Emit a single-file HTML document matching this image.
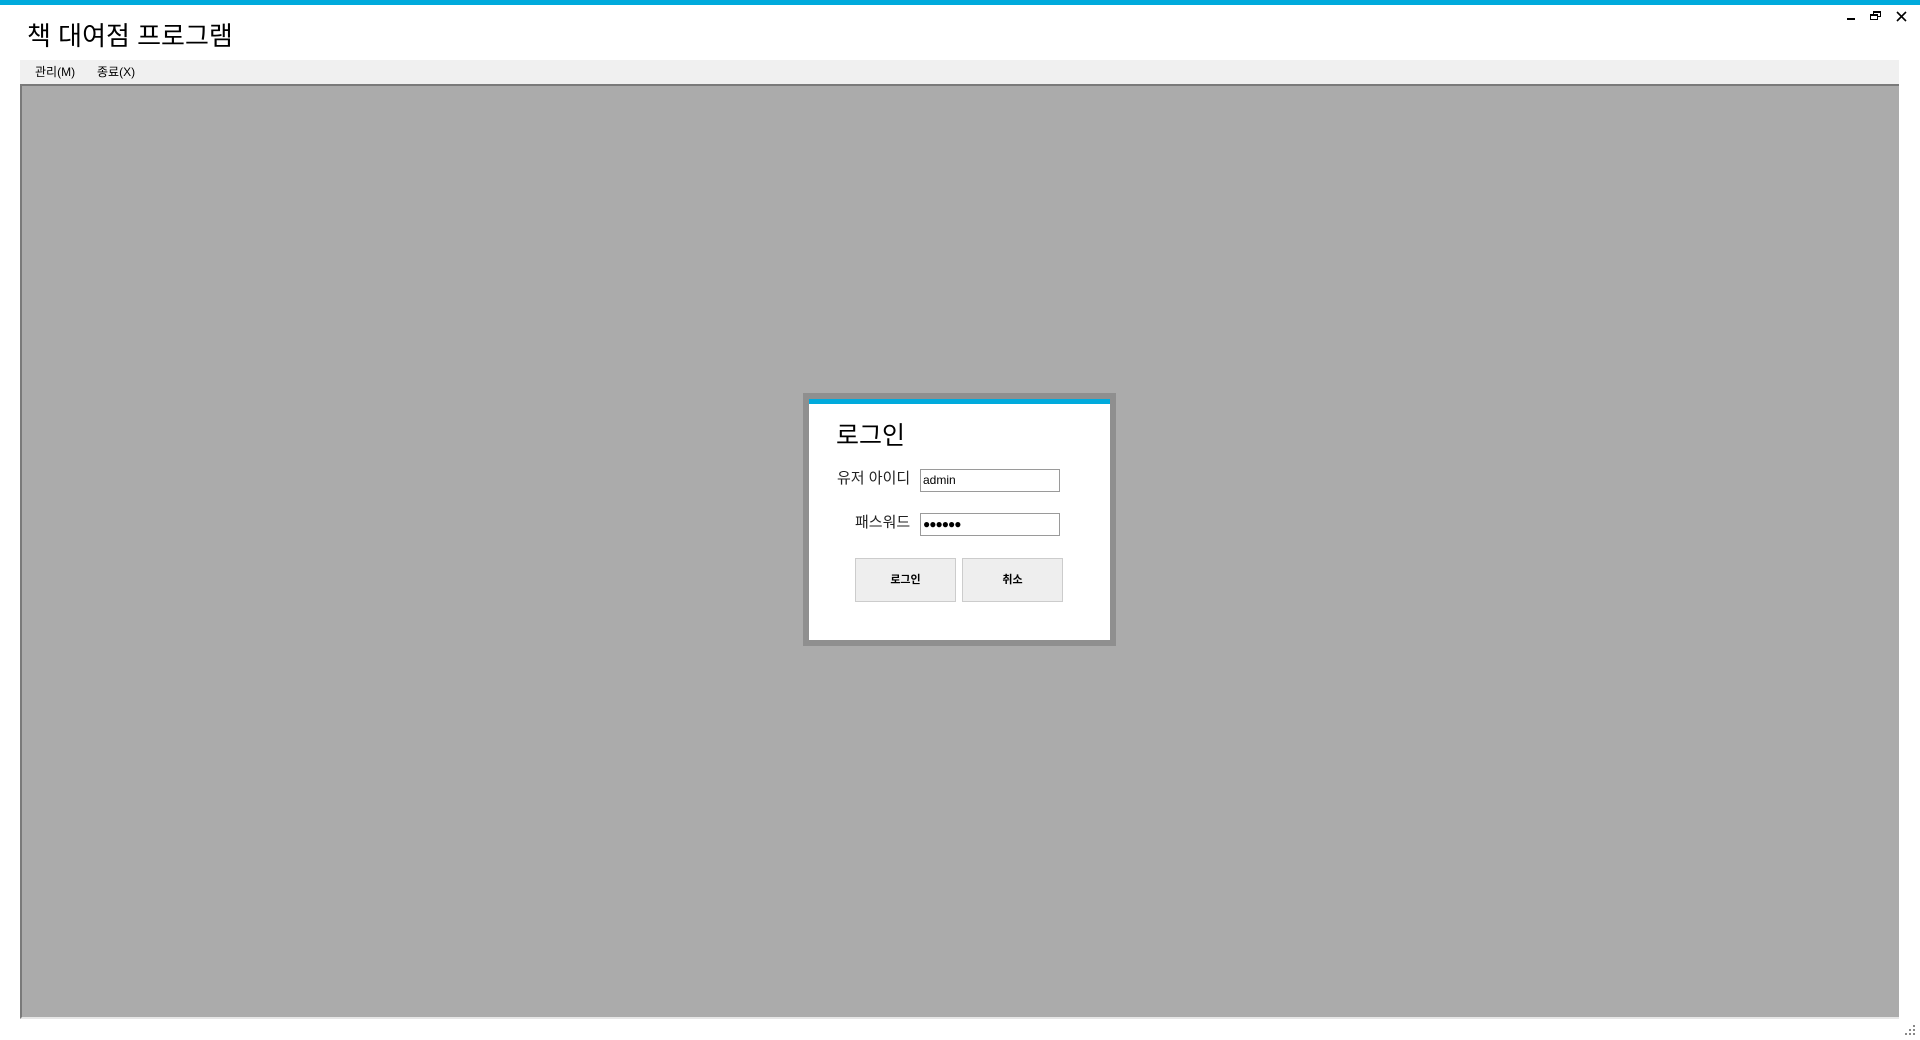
<!DOCTYPE html>
<html><head><meta charset="utf-8"><style>
*{margin:0;padding:0;box-sizing:border-box}
body{width:1920px;height:1040px;background:#fff;position:relative;overflow:hidden;font-family:"Liberation Sans","Noto Sans CJK KR",sans-serif;color:#000}
.abs{position:absolute}
</style></head><body>
<div class="abs" style="left:0;top:0;width:1920px;height:5px;background:#00aadc"></div>
<div class="abs" style="left:27px;top:19px;font-size:26px;line-height:34px">책 대여점 프로그램</div>
<div class="abs" style="left:1847px;top:18px;width:8px;height:2px;background:#000"></div>
<svg class="abs" style="left:1869px;top:10px" width="14" height="12"><rect x="4.5" y="1.5" width="7" height="5" fill="none" stroke="#000"/><rect x="1.5" y="4.5" width="7" height="5" fill="#fff" stroke="#000"/><line x1="4" y1="2" x2="12" y2="2" stroke="#000" stroke-width="2"/><line x1="1" y1="5" x2="9" y2="5" stroke="#000" stroke-width="2"/></svg>
<svg class="abs" style="left:1896px;top:11px" width="11" height="11"><path d="M1 1L10 10M10 1L1 10" stroke="#000" stroke-width="1.6"/></svg>
<div class="abs" style="left:20px;top:60px;width:1879px;height:24px;background:#f0f0f0"></div>
<div class="abs" style="left:35px;top:63px;font-size:12px;line-height:18px">관리(M)</div>
<div class="abs" style="left:97px;top:63px;font-size:12px;line-height:18px">종료(X)</div>
<div class="abs" style="left:20px;top:84px;width:1879px;height:935px;background:#ababab;border-top:2px solid #7a7a7a;border-left:2px solid #7a7a7a;border-bottom:2px solid #e6e6e6"></div>
<svg class="abs" style="left:1905px;top:1025px" width="12" height="12" fill="#888"><rect x="8" y="0" width="2" height="2"/><rect x="4" y="4" width="2" height="2"/><rect x="8" y="4" width="2" height="2"/><rect x="0" y="8" width="2" height="2"/><rect x="4" y="8" width="2" height="2"/><rect x="8" y="8" width="2" height="2"/></svg>
<div class="abs" style="left:803px;top:393px;width:313px;height:253px;background:#8f8f8f"></div>
<div class="abs" style="left:809px;top:399px;width:301px;height:241px;background:#fff"></div>
<div class="abs" style="left:809px;top:399px;width:301px;height:5px;background:#00aadc"></div>
<div class="abs" style="left:836px;top:419px;font-size:25px;line-height:34px">로그인</div>
<div class="abs" style="left:837px;top:468px;font-size:15px;line-height:22px;color:#222">유저 아이디</div>
<div class="abs" style="left:855px;top:512px;font-size:15px;line-height:22px;color:#222">패스워드</div>
<div class="abs" style="left:920px;top:469px;width:140px;height:23px;border:1px solid #9a9a9a;font-size:12px;line-height:21px;padding-left:2px">admin</div>
<div class="abs" style="left:920px;top:513px;width:140px;height:23px;border:1px solid #9a9a9a;font-size:12px;line-height:21px;padding-left:2px;letter-spacing:-1px">●●●●●●</div>
<div class="abs" style="left:855px;top:558px;width:101px;height:44px;background:#eeeeee;border:1px solid #cccccc;font-size:11px;font-weight:bold;text-align:center;line-height:42px">로그인</div>
<div class="abs" style="left:962px;top:558px;width:101px;height:44px;background:#eeeeee;border:1px solid #cccccc;font-size:11px;font-weight:bold;text-align:center;line-height:42px">취소</div>
</body></html>
